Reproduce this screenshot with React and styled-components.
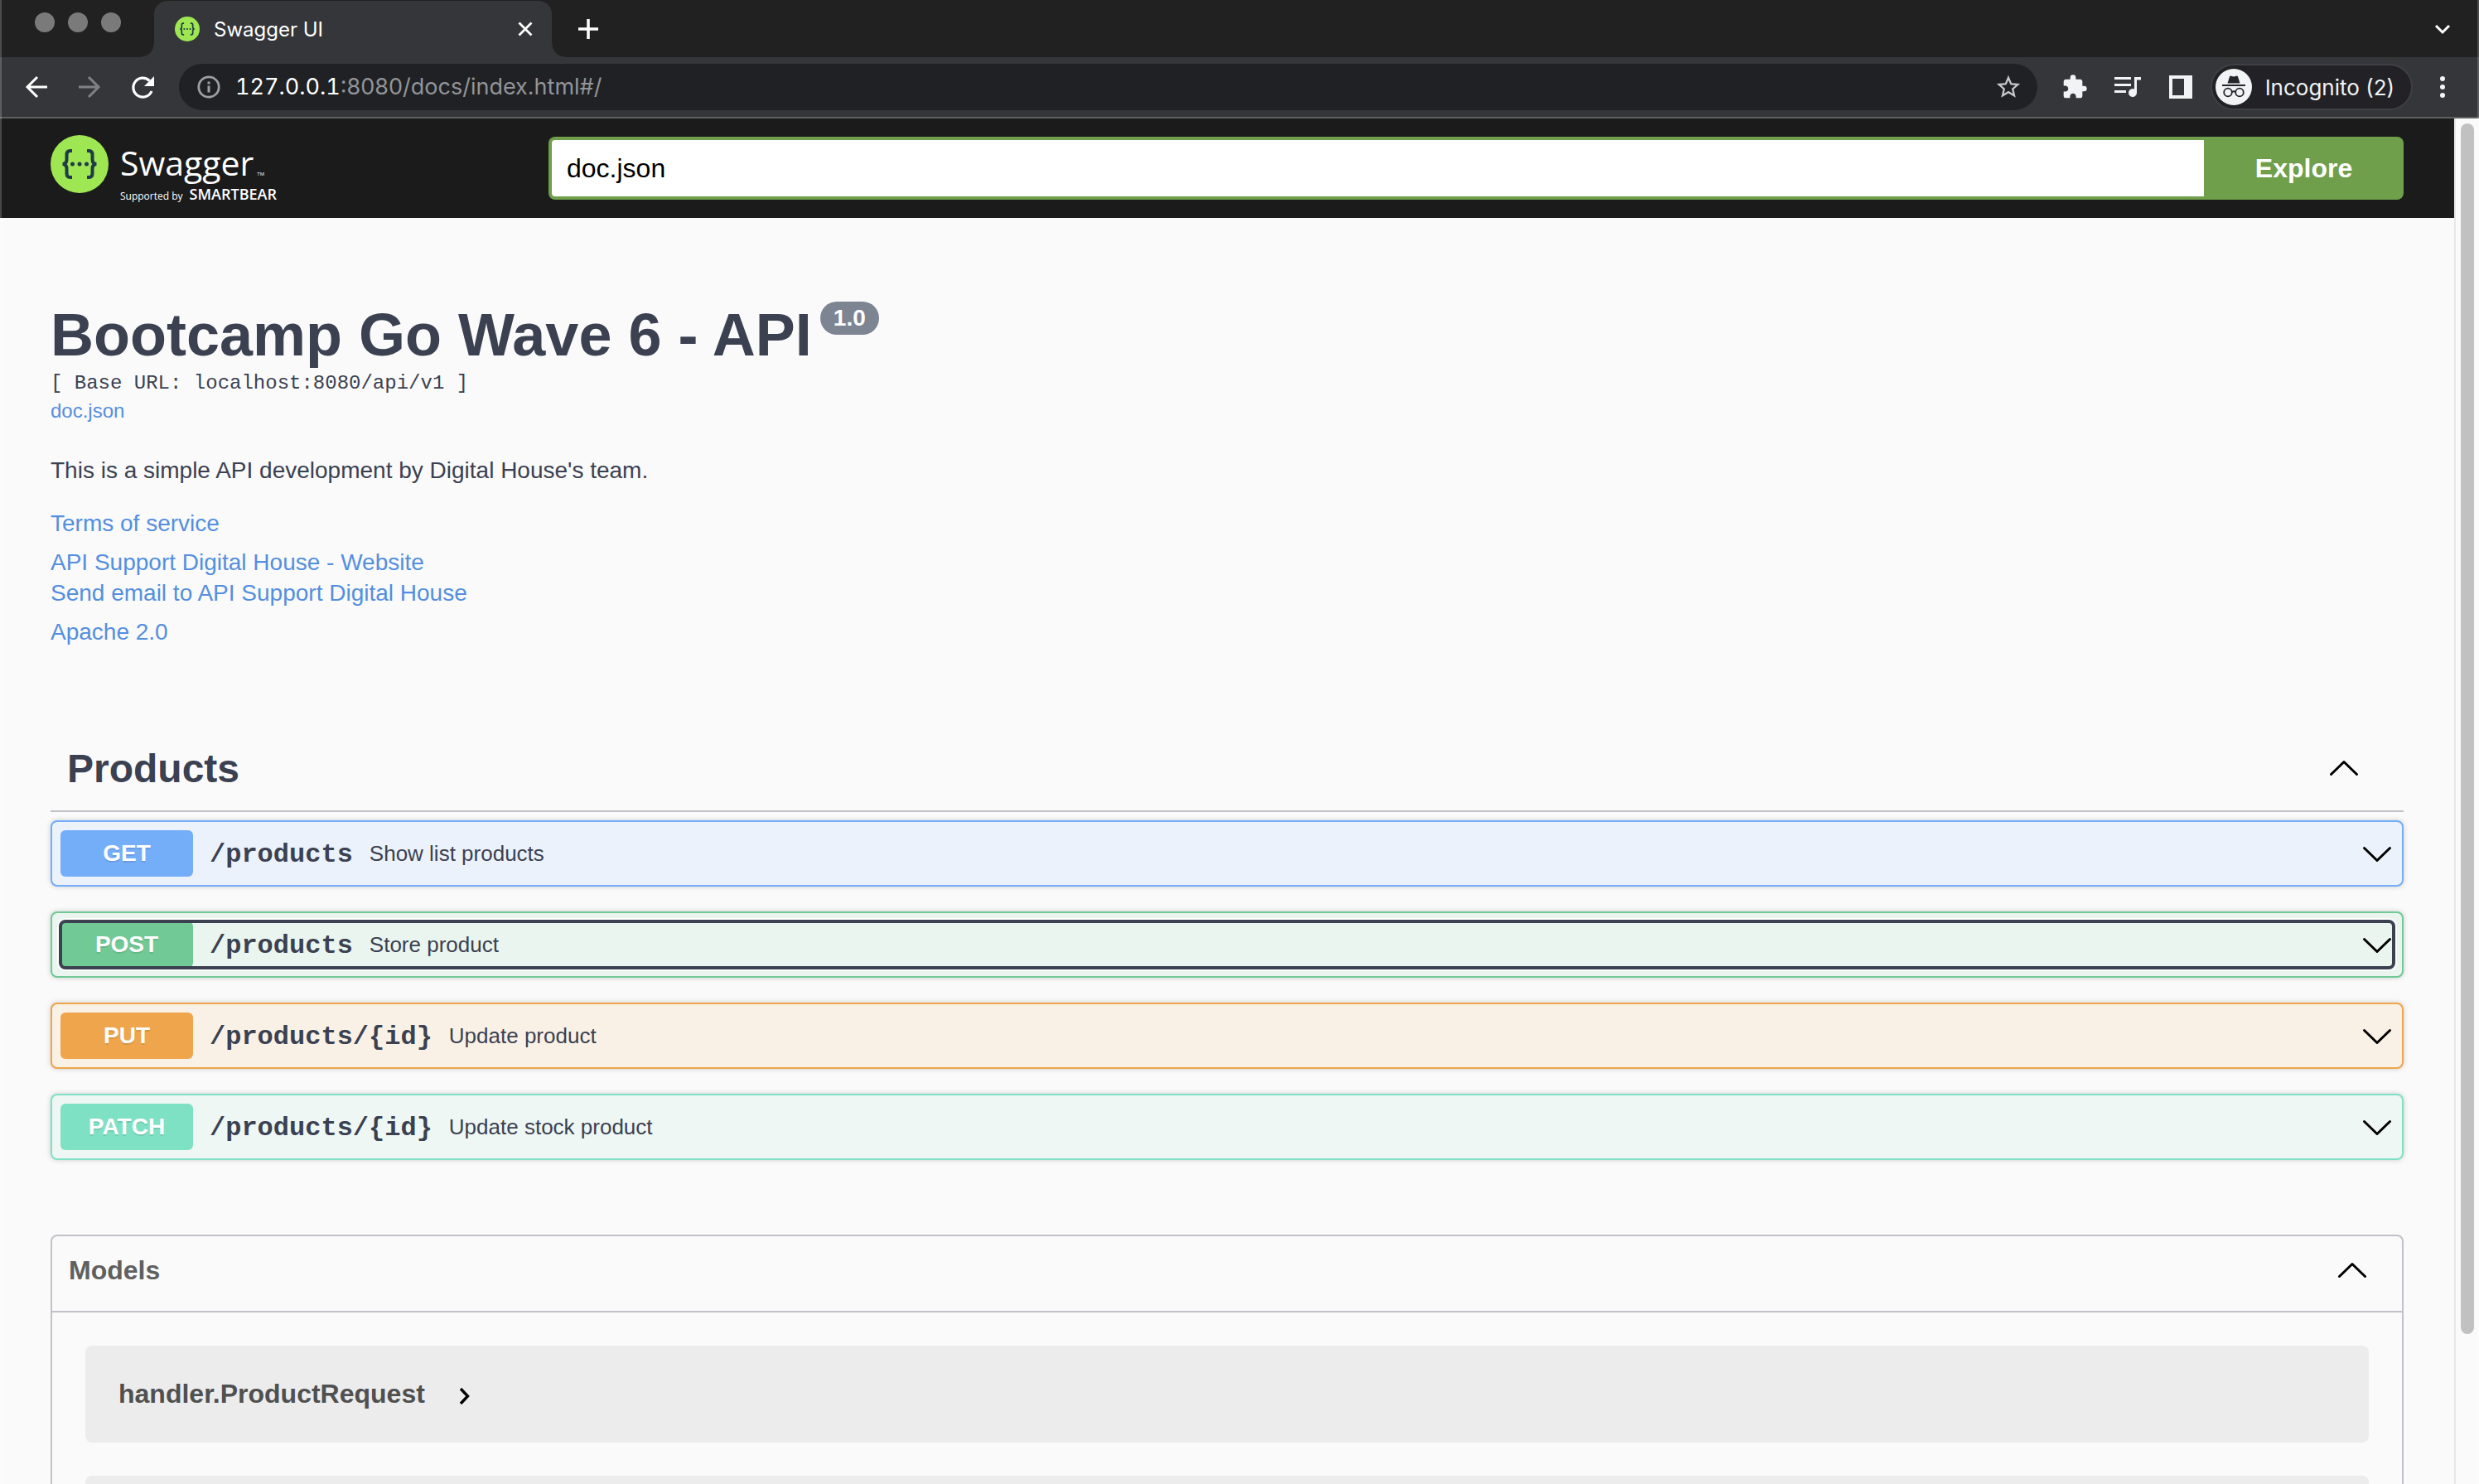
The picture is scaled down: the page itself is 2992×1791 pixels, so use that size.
import React from 'react';
import styled, { createGlobalStyle } from 'styled-components';

const Global = createGlobalStyle`
  * { box-sizing: border-box; }
  html, body, #root { height: 100%; }
  body { margin: 0; background: #fafafa; color: #3b4151; font-family: "Liberation Sans", Arial, sans-serif; overflow: hidden; }
  button { border: 0; padding: 0; margin: 0; background: none; color: inherit; font: inherit; cursor: pointer; }
  h1, h2, h3, p { margin: 0; }
  svg { display: block; flex: none; }
`;

const Window = styled.div`
  position: relative;
  display: flex;
  flex-direction: column;
  height: 100vh;
  &::after {
    content: "";
    position: absolute;
    inset: 0;
    border: solid rgba(255, 255, 255, 0.2);
    border-width: 0 2px;
    pointer-events: none;
  }
`;

/* Browser chrome */
const TabStrip = styled.div`
  display: flex;
  height: 69px;
  padding-right: 32px;
  background: #212121;
  color: #fff;
  font-family: Inter, sans-serif;
`;
const Lights = styled.div`
  display: flex;
  gap: 16px;
  width: 186px;
  padding: 15px 0 0 42px;
`;
const Light = styled.button`
  width: 24px;
  height: 24px;
  border-radius: 50%;
  background: #7a7a7a;
`;
const Tab = styled.div`
  position: relative;
  display: flex;
  align-items: center;
  width: 480px;
  margin-top: 1px;
  padding: 0 22px 0 25px;
  border-radius: 16px 16px 0 0;
  background: #35363a;
  font-size: 24px;
  &::before, &::after {
    content: "";
    position: absolute;
    bottom: 0;
    width: 16px;
    height: 16px;
  }
  &::before { left: -16px; background: radial-gradient(circle at 0 0, transparent 15px, #35363a 16px); }
  &::after { right: -16px; background: radial-gradient(circle at 100% 0, transparent 15px, #35363a 16px); }
`;
const TabTitle = styled.span`
  flex: 1;
  padding-left: 17px;
`;
const StripButton = styled.button`
  display: flex;
  align-items: center;
  justify-content: center;
  width: ${p => p.$w}px;
  margin-left: ${p => (p.$end ? 'auto' : 0)};
`;
const Toolbar = styled.div`
  display: flex;
  align-items: center;
  height: 74px;
  padding: 0 28px;
  background: #35363a;
  border-bottom: 2px solid #5f6063;
  color: #f1f3f4;
  font-family: Inter, sans-serif;
`;
const Nav = styled.div`
  display: flex;
  gap: 32px;
  width: 188px;
`;
const Address = styled.div`
  flex: 1;
  display: flex;
  align-items: center;
  height: 56px;
  padding: 0 18px 0 20px;
  border-radius: 28px;
  background: #202124;
`;
const Url = styled.div`
  flex: 1;
  padding-left: 16px;
  color: #929497;
  font-size: 27px;
  line-height: 56px;
`;
const UrlHost = styled.span`
  color: #fff;
  font-variant-numeric: tabular-nums;
`;
const Actions = styled.div`
  display: flex;
  gap: 32px;
  padding: 0 20px 0 29px;
`;
const Profile = styled.button`
  display: flex;
  align-items: center;
  gap: 16px;
  height: 56px;
  padding: 0 20px 0 4px;
  margin-right: 20px;
  border: 2px solid #3f4045;
  border-radius: 28px;
  background: #222226;
  font-size: 26px;
`;

/* Page viewport and its scrollbar */
const Viewport = styled.div`
  flex: 1;
  min-height: 0;
  display: flex;
`;
const Page = styled.main`
  flex: 1;
  min-width: 0;
  overflow: hidden;
`;
const ScrollTrack = styled.div`
  width: 30px;
  padding: 6px 6px 0 6px;
  border-left: 2px solid #e8e8e8;
  background: #fafafa;
`;
const ScrollThumb = styled.div`
  height: 89%;
  border-radius: 8px;
  background: #c1c1c1;
`;
const Wrapper = styled.div`
  max-width: 2920px;
  margin: 0 auto;
  padding: 0 40px;
`;

/* Swagger top bar */
const Topbar = styled.header`
  background: #1b1b1b;
`;
const TopbarRow = styled(Wrapper)`
  display: flex;
  align-items: center;
  height: 120px;
`;
const Logo = styled.a`
  display: flex;
  gap: 14px;
  width: 601px;
  height: 80px;
  color: #fff;
  font-family: "Open Sans", sans-serif;
  text-decoration: none;
`;
const LogoText = styled.span`
  display: flex;
  flex-direction: column;
  padding-top: 3px;
`;
const Wordmark = styled.span`
  display: flex;
  align-items: baseline;
  font-size: 41px;
  line-height: 60px;
`;
const Tm = styled.small`
  padding-left: 4px;
  font-size: 6px;
  line-height: 6px;
`;
const Supported = styled.span`
  display: flex;
  align-items: baseline;
  gap: 8px;
  font-size: 12px;
  line-height: 16px;
`;
const SmartBear = styled.strong`
  font-size: 18px;
  font-weight: 600;
`;
const SearchForm = styled.form`
  flex: 1;
  display: flex;
  height: 76px;
`;
const UrlInput = styled.input`
  flex: 1;
  min-width: 0;
  padding: 0 18px;
  border: 4px solid #709f4c;
  border-right: 0;
  border-radius: 8px 0 0 8px;
  outline: 0;
  background: #fff;
  color: #000;
  font: 32px "Liberation Sans", Arial, sans-serif;
`;
const Explore = styled.button`
  width: 241px;
  border-radius: 0 8px 8px 0;
  background: #709f4c;
  color: #fff;
  font-size: 32px;
  font-weight: 700;
`;

/* API information */
const Info = styled.section`
  display: flex;
  flex-direction: column;
  align-items: flex-start;
  padding: 99px 0 97px;
  font-size: 28px;
  line-height: 37px;
`;
const Title = styled.h1`
  display: flex;
  align-items: flex-start;
  gap: 10px;
  font-size: 72px;
  line-height: 84px;
`;
const Version = styled.span`
  height: 40px;
  margin-top: 2px;
  padding: 0 16px;
  border-radius: 20px;
  background: #7d8492;
  color: #fff;
  font-size: 28px;
  line-height: 40px;
`;
const BaseUrl = styled.pre`
  margin: 0;
  padding-top: 3px;
  font: 24px/28px "Liberation Mono", monospace;
`;
const Link = styled.a`
  color: #548fdf;
  text-decoration: none;
`;
const SpecLink = styled(Link)`
  padding-top: 5px;
  font-size: 24px;
  line-height: 28px;
`;
const Description = styled.p`
  padding: 39px 0 27px;
`;
const Contact = styled.div`
  display: flex;
  flex-direction: column;
  padding: 10px 0;
`;

/* Operations */
const TagHeader = styled.h2`
  display: flex;
  align-items: center;
  justify-content: space-between;
  height: 102px;
  padding: 0 52px 2px 20px;
  border-bottom: 2px solid #c1c2c8;
  font-size: 48px;
`;
const Operations = styled.div`
  display: flex;
  flex-direction: column;
  gap: 30px;
  padding: 10px 0 90px;
`;
const Operation = styled.div`
  padding: 10px;
  border: 2px solid ${p => p.$color};
  border-radius: 8px;
  background: ${p => p.$bg};
  box-shadow: 0 0 6px rgba(0, 0, 0, 0.19);
`;
const Summary = styled.button`
  display: flex;
  align-items: center;
  width: 100%;
  height: 56px;
  border-radius: 6px;
  text-align: left;
  ${p => p.$focused && `
    outline: 4px solid #3b4151;
    outline-offset: -2px;
    box-shadow: 0 0 0 4px #fff;
  `}
`;
const Method = styled.span`
  width: 160px;
  border-radius: 6px;
  background: ${p => p.$color};
  color: #fff;
  font-size: 28px;
  font-weight: 700;
  line-height: 56px;
  text-align: center;
  text-shadow: 0 2px 0 rgba(0, 0, 0, 0.1);
`;
const Path = styled.span`
  padding: 4px 20px 0;
  font: 700 32px/40px "Liberation Mono", monospace;
`;
const Note = styled.span`
  flex: 1;
  font-size: 26px;
`;

/* Models */
const Models = styled.section`
  border: 2px solid #c1c2c8;
  border-radius: 8px;
`;
const ModelsHeader = styled.h3`
  display: flex;
  align-items: center;
  justify-content: space-between;
  height: 92px;
  padding: 0 40px 8px 20px;
  border-bottom: 2px solid #c1c2c8;
  color: #606060;
  font-size: 32px;
`;
const ModelList = styled.div`
  display: flex;
  flex-direction: column;
  gap: 40px;
  padding: 40px;
`;
const Model = styled.button`
  display: flex;
  align-items: center;
  gap: 36px;
  height: 117px;
  padding: 0 40px;
  border-radius: 8px;
  background: #ececec;
  color: #505050;
  font-size: 32px;
  font-weight: 700;
`;

const Chevron = ({ up }) => (
  <svg width="40" height="40" viewBox="0 0 40 40" fill="none" stroke="#000" strokeWidth="3" strokeLinecap="round" strokeLinejoin="round">
    <path d={up ? 'M4.500 27.500L20 12.500L35.500 27.500' : 'M4.500 13.500L20 28.500L35.500 13.500'} />
  </svg>
);

const SwaggerMark = ({ size }) => (
  <svg width={size} height={size} viewBox="0 0 70 70">
    <circle cx="35" cy="35" r="35" fill="#9ee752" />
    <g fill="none" stroke="#1f3b47" strokeWidth="4">
      <path d="M26 19h-2.500c-3 0-4 1.800-4 4.500v5.500c0 3.500-1.500 6-5 6 3.500 0 5 2.500 5 6v5.500c0 2.700 1 4.500 4 4.500H26" />
      <path d="M44 19h2.500c3 0 4 1.800 4 4.500v5.500c0 3.500 1.500 6 5 6-3.500 0-5 2.500-5 6v5.500c0 2.700-1 4.500-4 4.500H44" />
    </g>
    <g fill="#1f3b47">
      <circle cx="26.500" cy="35" r="2.500" />
      <circle cx="35" cy="35" r="2.500" />
      <circle cx="43.500" cy="35" r="2.500" />
    </g>
  </svg>
);

const IconButton = ({ label, children }) => <button aria-label={label}>{children}</button>;

const operations = [
  { method: 'GET', path: '/products', note: 'Show list products', color: '#74adf8', bg: '#ebf2fb' },
  { method: 'POST', path: '/products', note: 'Store product', color: '#71c995', bg: '#e9f5ee', focused: true },
  { method: 'PUT', path: '/products/{id}', note: 'Update product', color: '#eea54b', bg: '#faf1e6' },
  { method: 'PATCH', path: '/products/{id}', note: 'Update stock product', color: '#7fe1c4', bg: '#eef7f4' },
];

export default function App() {
  return (
    <Window>
      <Global />
      <TabStrip>
        <Lights>
          <Light aria-label="Close window" />
          <Light aria-label="Minimise window" />
          <Light aria-label="Zoom window" />
        </Lights>
        <Tab>
          <SwaggerMark size={30} />
          <TabTitle>Swagger UI</TabTitle>
          <IconButton label="Close tab">
            <svg width="20" height="20" viewBox="0 0 20 20" stroke="#fff" strokeWidth="2.800">
              <path d="M2.500 2.500l15 15M17.500 2.500l-15 15" />
            </svg>
          </IconButton>
        </Tab>
        <StripButton $w={88} aria-label="New tab">
          <svg width="24" height="24" viewBox="0 0 24 24" stroke="#fff" strokeWidth="3.500">
            <path d="M12 0v24M0 12h24" />
          </svg>
        </StripButton>
        <StripButton $w={24} $end aria-label="Search tabs">
          <svg width="24" height="24" viewBox="0 0 24 24" fill="none" stroke="#fff" strokeWidth="3">
            <path d="M4 8l8 8 8-8" />
          </svg>
        </StripButton>
      </TabStrip>

      <Toolbar>
        <Nav>
          <IconButton label="Back">
            <svg width="32" height="32" viewBox="0 0 32 32" fill="none" stroke="#fff" strokeWidth="3">
              <path d="M29 16H5M17 4L5 16l12 12" />
            </svg>
          </IconButton>
          <IconButton label="Forward">
            <svg width="32" height="32" viewBox="0 0 32 32" fill="none" stroke="#7f8184" strokeWidth="3">
              <path d="M3 16h24M15 4l12 12-12 12" />
            </svg>
          </IconButton>
          <IconButton label="Reload">
            <svg width="32" height="32" viewBox="0 0 32 32">
              <path d="M27 21a11.500 11.500 0 1 1-2.500-12.500" fill="none" stroke="#fff" strokeWidth="3.200" />
              <path d="M30 3v12H18z" fill="#fff" />
            </svg>
          </IconButton>
        </Nav>
        <Address>
          <svg width="32" height="32" viewBox="0 0 32 32">
            <circle cx="16" cy="16" r="12.200" fill="none" stroke="#9aa0a6" strokeWidth="2.800" />
            <path d="M14.500 14.500h3v8h-3zM14.500 9.500h3v3h-3z" fill="#9aa0a6" />
          </svg>
          <Url><UrlHost>127.0.0.1</UrlHost>:8080/docs/index.html#/</Url>
          <IconButton label="Bookmark">
            <svg width="34" height="34" viewBox="0 0 24 24" fill="#c6c8ca">
              <path d="M22 9.240l-7.190-.62L12 2 9.190 8.630 2 9.240l5.460 4.730L5.820 21 12 17.270 18.180 21l-1.630-7.030L22 9.240zM12 15.400l-3.760 2.270 1-4.280-3.320-2.880 4.380-.38L12 6.100l1.710 4.040 4.380.38-3.320 2.880 1 4.280L12 15.400z" />
            </svg>
          </IconButton>
        </Address>
        <Actions>
          <IconButton label="Extensions">
            <svg width="32" height="32" viewBox="0 0 24 24" fill="#f1f3f4">
              <path d="M20.500 11H19V7c0-1.100-.9-2-2-2h-4V3.500a2.500 2.500 0 0 0-5 0V5H4c-1.100 0-1.990.9-1.990 2v3.800H3.500c1.490 0 2.700 1.210 2.700 2.700s-1.210 2.700-2.700 2.700H2V20c0 1.100.9 2 2 2h3.800v-1.500c0-1.490 1.210-2.700 2.700-2.700s2.700 1.210 2.700 2.700V22H17c1.100 0 2-.9 2-2v-4h1.500a2.500 2.500 0 0 0 0-5z" />
            </svg>
          </IconButton>
          <IconButton label="Media">
            <svg width="32" height="32" viewBox="0 0 32 32" fill="#f1f3f4">
              <path d="M0 4h20v3H0zM0 12h20v3H0zM0 20h14v3H0z" />
              <path d="M24 4h8v3.500h-5v15.500a5 5 0 1 1-3-4.600z" />
            </svg>
          </IconButton>
          <IconButton label="Side panel">
            <svg width="32" height="32" viewBox="0 0 32 32">
              <path fillRule="evenodd" d="M2 2h28v28H2zM6 6v20h14V6z" fill="#f1f3f4" />
            </svg>
          </IconButton>
        </Actions>
        <Profile>
          <svg width="44" height="44" viewBox="0 0 44 44">
            <circle cx="22" cy="22" r="22" fill="#f1f3f4" />
            <path d="M14.500 17.500L17 9.500q.5-1.200 1.800-.8l3.200.8 3.200-.8q1.300-.4 1.800.8l2.500 8zM8 19h28v2H8z" fill="#26262a" />
            <g fill="none" stroke="#26262a" strokeWidth="1.800">
              <circle cx="15" cy="28.500" r="4.800" />
              <circle cx="29" cy="28.500" r="4.800" />
              <path d="M19.800 28q2.200-1.500 4.400 0" />
            </g>
          </svg>
          Incognito (2)
        </Profile>
        <IconButton label="Menu">
          <svg width="32" height="32" viewBox="0 0 32 32" fill="#f1f3f4">
            <circle cx="16" cy="6" r="3" />
            <circle cx="16" cy="16" r="3" />
            <circle cx="16" cy="26" r="3" />
          </svg>
        </IconButton>
      </Toolbar>

      <Viewport>
        <Page>
          <Topbar>
            <TopbarRow>
              <Logo href="#/" aria-label="Swagger">
                <SwaggerMark size={70} />
                <LogoText>
                  <Wordmark>Swagger<Tm>TM</Tm></Wordmark>
                  <Supported>Supported by <SmartBear>SMARTBEAR</SmartBear></Supported>
                </LogoText>
              </Logo>
              <SearchForm onSubmit={e => e.preventDefault()}>
                <UrlInput aria-label="Specification URL" defaultValue="doc.json" />
                <Explore>Explore</Explore>
              </SearchForm>
            </TopbarRow>
          </Topbar>

          <Wrapper>
            <Info>
              <Title>Bootcamp Go Wave 6 - API<Version>1.0</Version></Title>
              <BaseUrl>[ Base URL: localhost:8080/api/v1 ]</BaseUrl>
              <SpecLink href="#doc">doc.json</SpecLink>
              <Description>This is a simple API development by Digital House's team.</Description>
              <Link href="#terms">Terms of service</Link>
              <Contact>
                <Link href="#website">API Support Digital House - Website</Link>
                <Link href="#email">Send email to API Support Digital House</Link>
              </Contact>
              <Link href="#license">Apache 2.0</Link>
            </Info>

            <TagHeader>
              Products
              <IconButton label="Collapse Products"><Chevron up /></IconButton>
            </TagHeader>
            <Operations>
              {operations.map(op => (
                <Operation key={op.method} $color={op.color} $bg={op.bg}>
                  <Summary $focused={op.focused}>
                    <Method $color={op.color}>{op.method}</Method>
                    <Path>{op.path}</Path>
                    <Note>{op.note}</Note>
                    <Chevron />
                  </Summary>
                </Operation>
              ))}
            </Operations>

            <Models>
              <ModelsHeader>
                Models
                <IconButton label="Collapse Models"><Chevron up /></IconButton>
              </ModelsHeader>
              <ModelList>
                <Model>
                  handler.ProductRequest
                  <svg width="24" height="24" viewBox="0 0 24 24" fill="none" stroke="#000" strokeWidth="3.400">
                    <path d="M7 5l8.500 9L7 23" />
                  </svg>
                </Model>
                <Model aria-label="Next model" />
              </ModelList>
            </Models>
          </Wrapper>
        </Page>
        <ScrollTrack><ScrollThumb /></ScrollTrack>
      </Viewport>
    </Window>
  );
}
